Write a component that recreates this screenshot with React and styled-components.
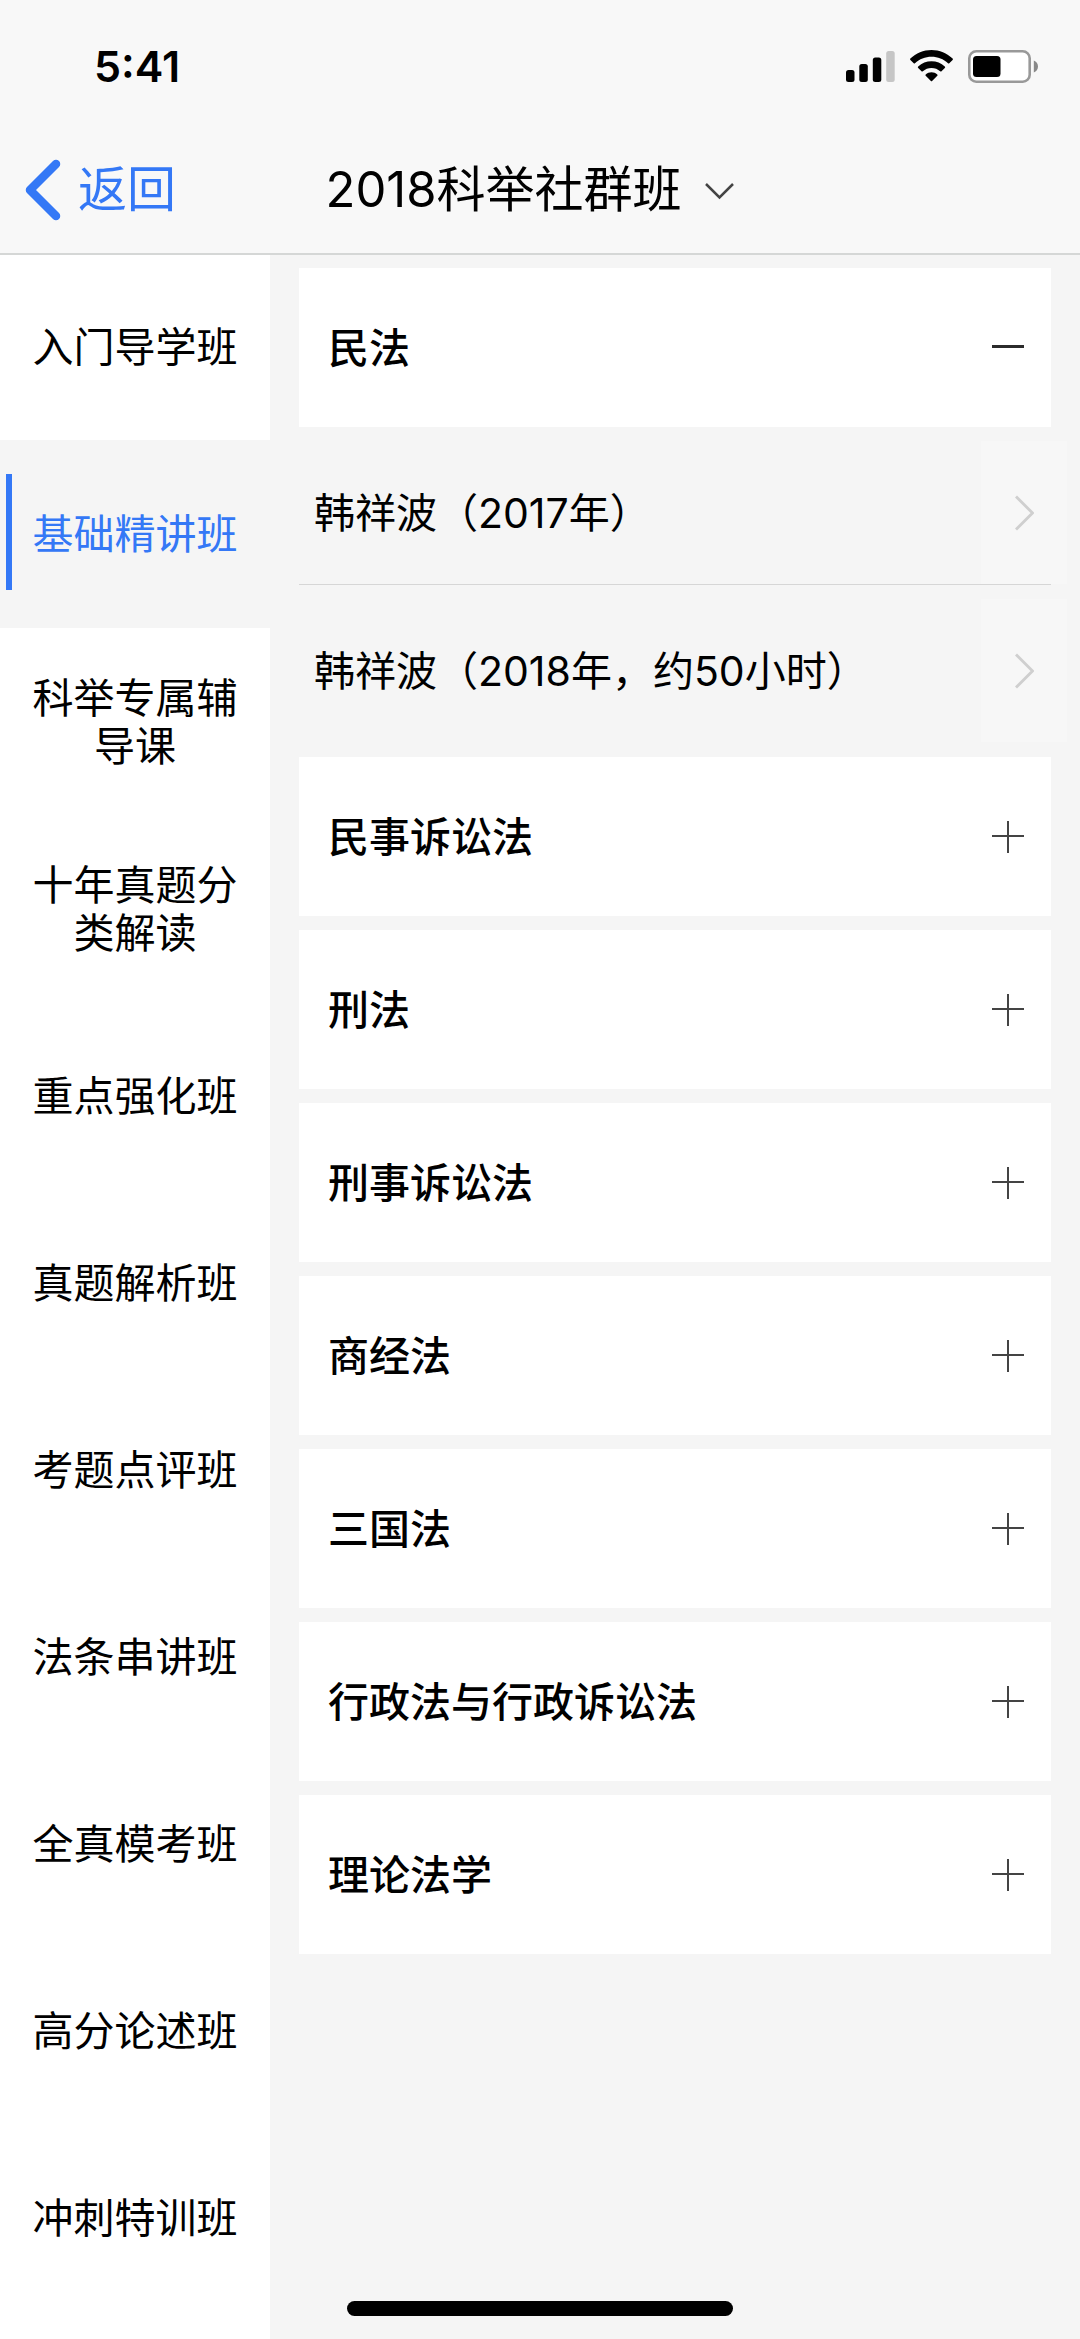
import React, { useState } from "react";
import styled, { createGlobalStyle } from "styled-components";

const GlobalStyle = createGlobalStyle`
    * {
        box-sizing: border-box;
    }

    body {
        margin: 0;
        background: #f5f5f5;
        color: #000;
        font-family: Inter, "Noto Sans CJK SC", sans-serif;
        font-size: 41px;
        line-height: 48px;
    }

    button, select {
        border: none;
        background: none;
        color: inherit;
        font: inherit;
        cursor: pointer;
    }
`

const Page = styled.div`
    display: flex;
    flex-direction: column;
    min-height: 100vh;
`

const Header = styled.header`
    position: relative;
    z-index: 1;
    background: #f8f8f8;
    box-shadow: 0 2px 0 #d5d7d6;
`

const StatusBar = styled.div`
    display: flex;
    justify-content: space-between;
    align-items: center;
    height: 132px;
    padding: 0 42px 0 94px;
`

const Time = styled.span`
    font-size: 43px;
    font-weight: 600;
`

const StatusIcons = styled.div`
    display: flex;
    align-items: center;
    gap: 15px;
`

const NavBar = styled.nav`
    display: grid;
    grid-template-columns: 1fr auto 1fr;
    align-items: center;
    height: 121px;
    padding: 0 24px 5px;
    font-size: 49px;
    line-height: 60px;
`

const BackButton = styled.button`
    display: flex;
    align-items: center;
    justify-self: start;
    gap: 16px;
    padding: 0;
    color: #3478f6;
`

const CoursePicker = styled.label`
    display: flex;
    align-items: center;
`

const CourseSelect = styled.select`
    appearance: none;
    margin: 0;
    padding: 0;
    outline: none;
`

const Main = styled.main`
    display: flex;
    flex: 1;
`

const Sidebar = styled.aside`
    width: 25%;
    flex-shrink: 0;
    background: #fff;
`

const StageButton = styled.button`
    position: relative;
    display: block;
    width: 100%;
    min-height: ${({ $active }) => ($active ? 188 : 187)}px;
    padding: 0 30px;
    text-align: center;
    color: ${({ $active }) => ($active ? "#3478f6" : "#000")};
    background: ${({ $active }) => ($active ? "#f5f5f5" : "#fff")};

    &::before {
        content: "";
        display: ${({ $active }) => ($active ? "block" : "none")};
        position: absolute;
        left: 6px;
        top: 34px;
        width: 6px;
        height: 116px;
        background: #3478f6;
    }
`

const SubjectList = styled.section`
    display: flex;
    flex: 1;
    flex-direction: column;
    gap: 14px;
    min-width: 0;
    padding: 15px 29px;
`

const SubjectButton = styled.button`
    display: flex;
    justify-content: space-between;
    align-items: center;
    min-height: 159px;
    padding: 0 27px 0 29px;
    background: #fff;
    font-weight: 500;
    text-align: left;
`

const LessonLink = styled.a`
    display: flex;
    justify-content: space-between;
    align-items: stretch;
    min-height: 144px;
    padding-left: 15px;
    border-bottom: 1px solid ${({ $last }) => ($last ? "transparent" : "#d6d6d6")};
    color: inherit;
    text-decoration: none;
`

const LessonName = styled.span`
    align-self: center;
`

const LessonArrow = styled.span`
    display: flex;
    justify-content: center;
    align-items: center;
    width: 86px;
    margin-right: -16px;
    background: #f7f7f7;
`

const HomeIndicator = styled.div`
    position: fixed;
    bottom: 23px;
    left: 50%;
    width: 386px;
    height: 15px;
    margin-left: -193px;
    border-radius: 8px;
    background: #000;
`

const stages = [
    "入门导学班",
    "基础精讲班",
    "科举专属辅导课",
    "十年真题分类解读",
    "重点强化班",
    "真题解析班",
    "考题点评班",
    "法条串讲班",
    "全真模考班",
    "高分论述班",
    "冲刺特训班",
]

const subjects = [
    { name: "民法", lessons: ["韩祥波（2017年）", "韩祥波（2018年，约50小时）"] },
    { name: "民事诉讼法", lessons: [] },
    { name: "刑法", lessons: [] },
    { name: "刑事诉讼法", lessons: [] },
    { name: "商经法", lessons: [] },
    { name: "三国法", lessons: [] },
    { name: "行政法与行政诉讼法", lessons: [] },
    { name: "理论法学", lessons: [] },
]

function SignalIcon() {
    return (
        <svg width="49" height="32" viewBox="0 0 49 32" aria-hidden="true">
            <rect x="0" y="20" width="8.5" height="12" rx="2.5" />
            <rect x="13.3" y="14" width="8.5" height="18" rx="2.5" />
            <rect x="26.8" y="7.5" width="8.5" height="24.5" rx="2.5" />
            <rect x="40.2" y="1" width="8.5" height="31" rx="2.5" fill="#c6c6c6" />
        </svg>
    )
}

function WifiIcon() {
    return (
        <svg width="43" height="32" viewBox="0 0 43 32" aria-hidden="true">
            <path d="M21.5 0C13.5 0 6 3.2.4 8.6a1 1 0 0 0 0 1.4l3.3 3.3a1 1 0 0 0 1.3 0C9.4 9 15.2 6.7 21.5 6.7S33.6 9 38 13.3a1 1 0 0 0 1.3 0l3.3-3.3a1 1 0 0 0 0-1.4C37 3.2 29.5 0 21.5 0Z" />
            <path d="M21.5 11.2c-5 0-9.7 1.9-13.3 5.2a1 1 0 0 0 0 1.5l3.3 3.3a1 1 0 0 0 1.3 0c2.4-2.1 5.4-3.3 8.7-3.3s6.3 1.2 8.7 3.3a1 1 0 0 0 1.3 0l3.3-3.3a1 1 0 0 0 0-1.5c-3.6-3.3-8.3-5.2-13.3-5.2Z" />
            <path d="M21.5 22.2c-2.2 0-4.2.8-5.8 2.2a.9.9 0 0 0 0 1.3l5.2 5.3a.8.8 0 0 0 1.2 0l5.2-5.3a.9.9 0 0 0 0-1.3c-1.6-1.4-3.6-2.2-5.8-2.2Z" />
        </svg>
    )
}

function BatteryIcon() {
    return (
        <svg width="70" height="33" viewBox="0 0 70 33" aria-hidden="true">
            <rect x="1.3" y="1.3" width="60.4" height="30.4" rx="7" fill="#fff" stroke="#999" strokeWidth="2.6" />
            <rect x="5" y="6" width="27.5" height="21" rx="3.5" />
            <path d="M65.8 10.5c2.5.8 4.2 3.2 4.2 6s-1.7 5.2-4.2 6Z" fill="#888" />
        </svg>
    )
}

function ToggleIcon({ open }) {
    return (
        <svg width="32" height="32" viewBox="0 0 32 32" fill="none" aria-hidden="true">
            {open ? (
                <path d="M0 14.5h32" stroke="#2b2b2b" strokeWidth="3" />
            ) : (
                <path d="M0 15h32M16 0v32" stroke="#444" strokeWidth="2" />
            )}
        </svg>
    )
}

function App() {
    const [stage, setStage] = useState("基础精讲班")
    const [openSubject, setOpenSubject] = useState("民法")

    return (
        <Page>
            <GlobalStyle />
            <Header>
                <StatusBar>
                    <Time>5:41</Time>
                    <StatusIcons>
                        <SignalIcon />
                        <WifiIcon />
                        <BatteryIcon />
                    </StatusIcons>
                </StatusBar>
                <NavBar>
                    <BackButton type="button">
                        <svg width="38" height="62" viewBox="0 0 38 62" fill="none" aria-hidden="true">
                            <path d="M32 5L6 31l26 26" stroke="currentColor" strokeWidth="8.5" strokeLinecap="round" strokeLinejoin="round" />
                        </svg>
                        返回
                    </BackButton>
                    <CoursePicker>
                        <CourseSelect aria-label="课程">
                            <option>2018科举社群班</option>
                        </CourseSelect>
                        <svg width="72" height="24" viewBox="0 0 72 24" fill="none" aria-hidden="true">
                            <path d="M23 6l13.500 13.500L50 6" stroke="#444" strokeWidth="2.5" />
                        </svg>
                    </CoursePicker>
                </NavBar>
            </Header>
            <Main>
                <Sidebar>
                    {stages.map((name) => (
                        <StageButton
                            key={name}
                            type="button"
                            $active={name === stage}
                            onClick={() => setStage(name)}
                        >
                            {name}
                        </StageButton>
                    ))}
                </Sidebar>
                <SubjectList>
                    {subjects.map(({ name, lessons }) => {
                        const open = name === openSubject
                        return (
                            <React.Fragment key={name}>
                                <SubjectButton
                                    type="button"
                                    aria-expanded={open}
                                    onClick={() => setOpenSubject(open ? null : name)}
                                >
                                    {name}
                                    <ToggleIcon open={open} />
                                </SubjectButton>
                                {open && lessons.map((lesson, i) => (
                                    <LessonLink key={lesson} href="#" $last={i === lessons.length - 1}>
                                        <LessonName>{lesson}</LessonName>
                                        <LessonArrow>
                                            <svg width="20" height="36" viewBox="0 0 20 36" fill="none" aria-hidden="true">
                                                <path d="M2 1.5L18.500 18 2 34.500" stroke="#cfcfcf" strokeWidth="2.8" />
                                            </svg>
                                        </LessonArrow>
                                    </LessonLink>
                                ))}
                            </React.Fragment>
                        )
                    })}
                </SubjectList>
            </Main>
            <HomeIndicator />
        </Page>
    )
}

export default App;
